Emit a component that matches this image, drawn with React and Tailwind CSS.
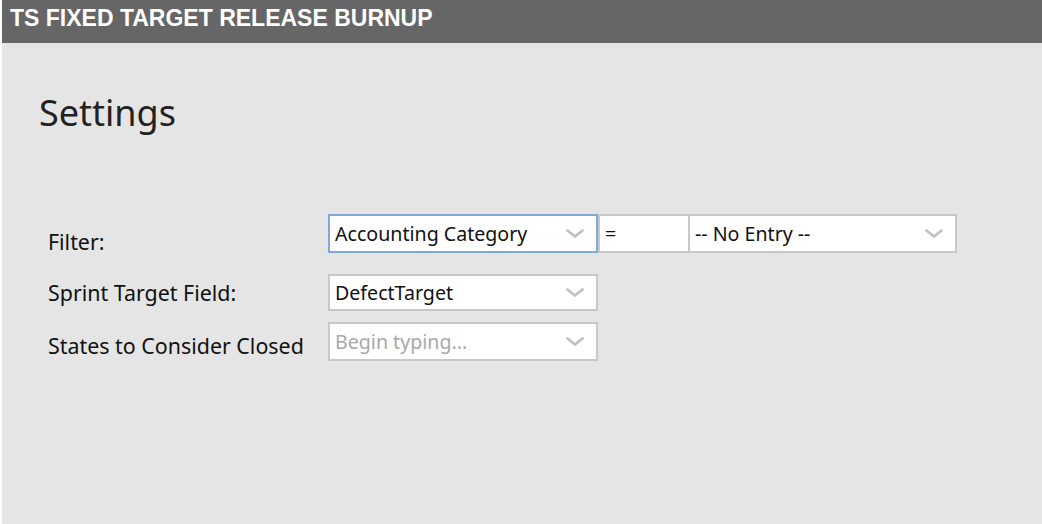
import React from 'react'

function Chevron() {
  return (
    <svg width="18" height="9" viewBox="0 0 18 9" className="shrink-0">
      <path d="M1.5 1.5 L9 7.5 L16.5 1.5" fill="none" stroke="#c0c0c0" strokeWidth="2.8" strokeLinecap="round" strokeLinejoin="round" />
    </svg>
  )
}

function Combo({ value, placeholder, focused, className = '' }) {
  return (
    <div
      className={`flex items-center justify-between bg-white border-2 pl-[5px] pr-[12px] ${
        focused ? 'border-[#7fa9d9]' : 'border-[#c8c8c8]'
      } ${className}`}
    >
      <span className={`text-[19.6px] leading-none ${placeholder ? 'text-[#a9a9a9]' : 'text-[#111]'}`}>
        {value || placeholder}
      </span>
      <Chevron />
    </div>
  )
}

export default function App() {
  return (
    <div className="w-[1042px] h-[524px] bg-white pl-[2px] flex flex-col" style={{ fontFamily: '"Noto Sans", "Open Sans", sans-serif' }}>
      <div className="h-[43px] bg-[#666666] pl-[8px] pt-[7px]">
        <h2 className="text-white font-bold text-[23px] leading-none" style={{ fontFamily: '"Liberation Sans", Arial, sans-serif' }}>
          TS FIXED TARGET RELEASE BURNUP
        </h2>
      </div>

      <div className="flex-1 bg-[#e5e5e5] pl-[37px] pt-[52px]">
        <h1 className="text-[36px] leading-none text-[#222]">Settings</h1>

        <div className="mt-[83px] pl-[9px] text-[#111] text-[21.4px] leading-none">
          <div className="flex items-start">
            <div className="w-[280px] pt-[17px]">Filter:</div>
            <div className="flex">
              <Combo value="Accounting Category" focused className="w-[270px] h-[39px]" />
              <div className="w-[92px] h-[39px] bg-white border-2 border-[#c8c8c8] pl-[5px] flex items-center">
                <span className="text-[19.6px] leading-none">=</span>
              </div>
              <Combo value="-- No Entry --" className="w-[267px] h-[39px] border-l-0" />
            </div>
          </div>

          <div className="flex items-start mt-[21px]">
            <div className="w-[280px] pt-[8px]">Sprint Target Field:</div>
            <Combo value="DefectTarget" className="w-[270px] h-[37px]" />
          </div>

          <div className="flex items-start mt-[11px]">
            <div className="w-[280px] pt-[13px]">States to Consider Closed</div>
            <Combo placeholder="Begin typing..." className="w-[270px] h-[39px]" />
          </div>
        </div>
      </div>
    </div>
  )
}
